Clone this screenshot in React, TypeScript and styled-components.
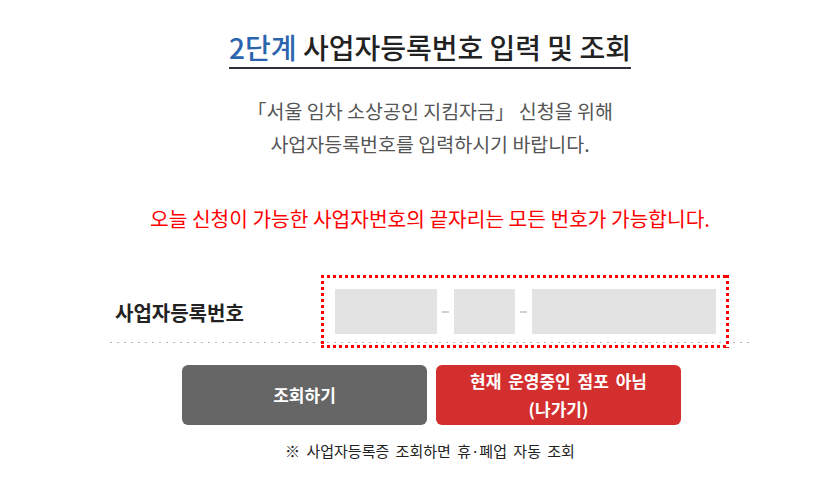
import styled, { createGlobalStyle } from "styled-components";

const GlobalStyle = createGlobalStyle`
    html, body {
        margin: 0;
        padding: 0;
        background: #ffffff;
    }
    body {
        font-family: "Noto Sans CJK KR", "Noto Sans", sans-serif;
        color: #222222;
    }
`;

const Page = styled.div`
    padding-left: 30px;
    display: flex;
    flex-direction: column;
    align-items: center;
`;

const Title = styled.h2`
    margin: 30px 0 0;
    padding-bottom: 3px;
    border-bottom: 2px solid #2e3138;
    font-size: 28px;
    line-height: 34px;
    font-weight: 500;
    color: #222222;
`;

const Step = styled.span`
    color: #2b64ae;
`;

const Lead = styled.p`
    margin: 25px 0 0;
    font-size: 19.5px;
    line-height: 33px;
    color: #555555;
    text-align: center;
`;

const Notice = styled.p`
    margin: 44px 0 0;
    font-size: 20.3px;
    line-height: 28px;
    color: #ff0000;
    text-align: center;
`;

const Row = styled.div`
    margin-top: 43px;
    width: 640px;
    display: flex;
    align-items: flex-start;
    padding-bottom: 1px;
    background: linear-gradient(to right, #b4b4b4 2px, transparent 2px) repeat-x left bottom / 7px 1px;
`;

const Label = styled.div`
    width: 206px;
    padding: 25px 0 0 5px;
    font-size: 20px;
    line-height: 26px;
    font-weight: 700;
    color: #222222;
`;

// square red dots, like the focus frame in the original page
const InputGroup = styled.div`
    display: flex;
    align-items: center;
    padding: 14px 13px 14px 14px;
    margin-bottom: -6px;
    background:
        linear-gradient(to right, #ff0000 50%, transparent 0) left top / 6px 3px repeat-x,
        linear-gradient(to right, #ff0000 50%, transparent 0) left bottom / 6px 3px repeat-x,
        linear-gradient(to bottom, #ff0000 50%, transparent 0) left top / 3px 6px repeat-y,
        linear-gradient(to bottom, #ff0000 50%, transparent 0) right top / 3px 6px repeat-y;
`;

const Field = styled.div<{ $w: number }>`
    width: ${(p) => p.$w}px;
    height: 45px;
    background: #e3e3e3;
`;

const Dash = styled.span`
    width: 17px;
    display: flex;
    justify-content: center;
    &::before {
        content: "";
        width: 7px;
        height: 2px;
        background: #c9d2d6;
    }
`;

const Buttons = styled.div`
    margin-top: 22px;
    margin-left: 3px;
    display: flex;
    gap: 9px;
`;

const Button = styled.button<{ $tone: "gray" | "red" }>`
    width: 245px;
    height: 60px;
    border: 0;
    border-radius: 6px;
    background: ${(p) => (p.$tone === "red" ? "#d32f2f" : "#666666")};
    color: #ffffff;
    font-family: inherit;
    font-size: 17px;
    font-weight: 700;
    line-height: 28px;
    word-spacing: 3px;
    cursor: pointer;
`;

const Note = styled.p`
    margin: 15px 0 0;
    font-size: 15px;
    line-height: 22px;
    word-spacing: 3px;
    color: #222222;
`;

export default function App() {
    return (
        <>
            <GlobalStyle />
            <Page>
                <Title>
                    <Step>2단계</Step> 사업자등록번호 입력 및 조회
                </Title>
                <Lead>
                    「서울 임차 소상공인 지킴자금」 신청을 위해
                    <br />
                    사업자등록번호를 입력하시기 바랍니다.
                </Lead>
                <Notice>오늘 신청이 가능한 사업자번호의 끝자리는 모든 번호가 가능합니다.</Notice>
                <Row>
                    <Label>사업자등록번호</Label>
                    <InputGroup>
                        <Field $w={102} />
                        <Dash />
                        <Field $w={61} />
                        <Dash />
                        <Field $w={184} />
                    </InputGroup>
                </Row>
                <Buttons>
                    <Button $tone="gray">조회하기</Button>
                    <Button $tone="red">
                        현재 운영중인 점포 아님
                        <br />
                        (나가기)
                    </Button>
                </Buttons>
                <Note>※ 사업자등록증 조회하면 휴·폐업 자동 조회</Note>
            </Page>
        </>
    );
}
